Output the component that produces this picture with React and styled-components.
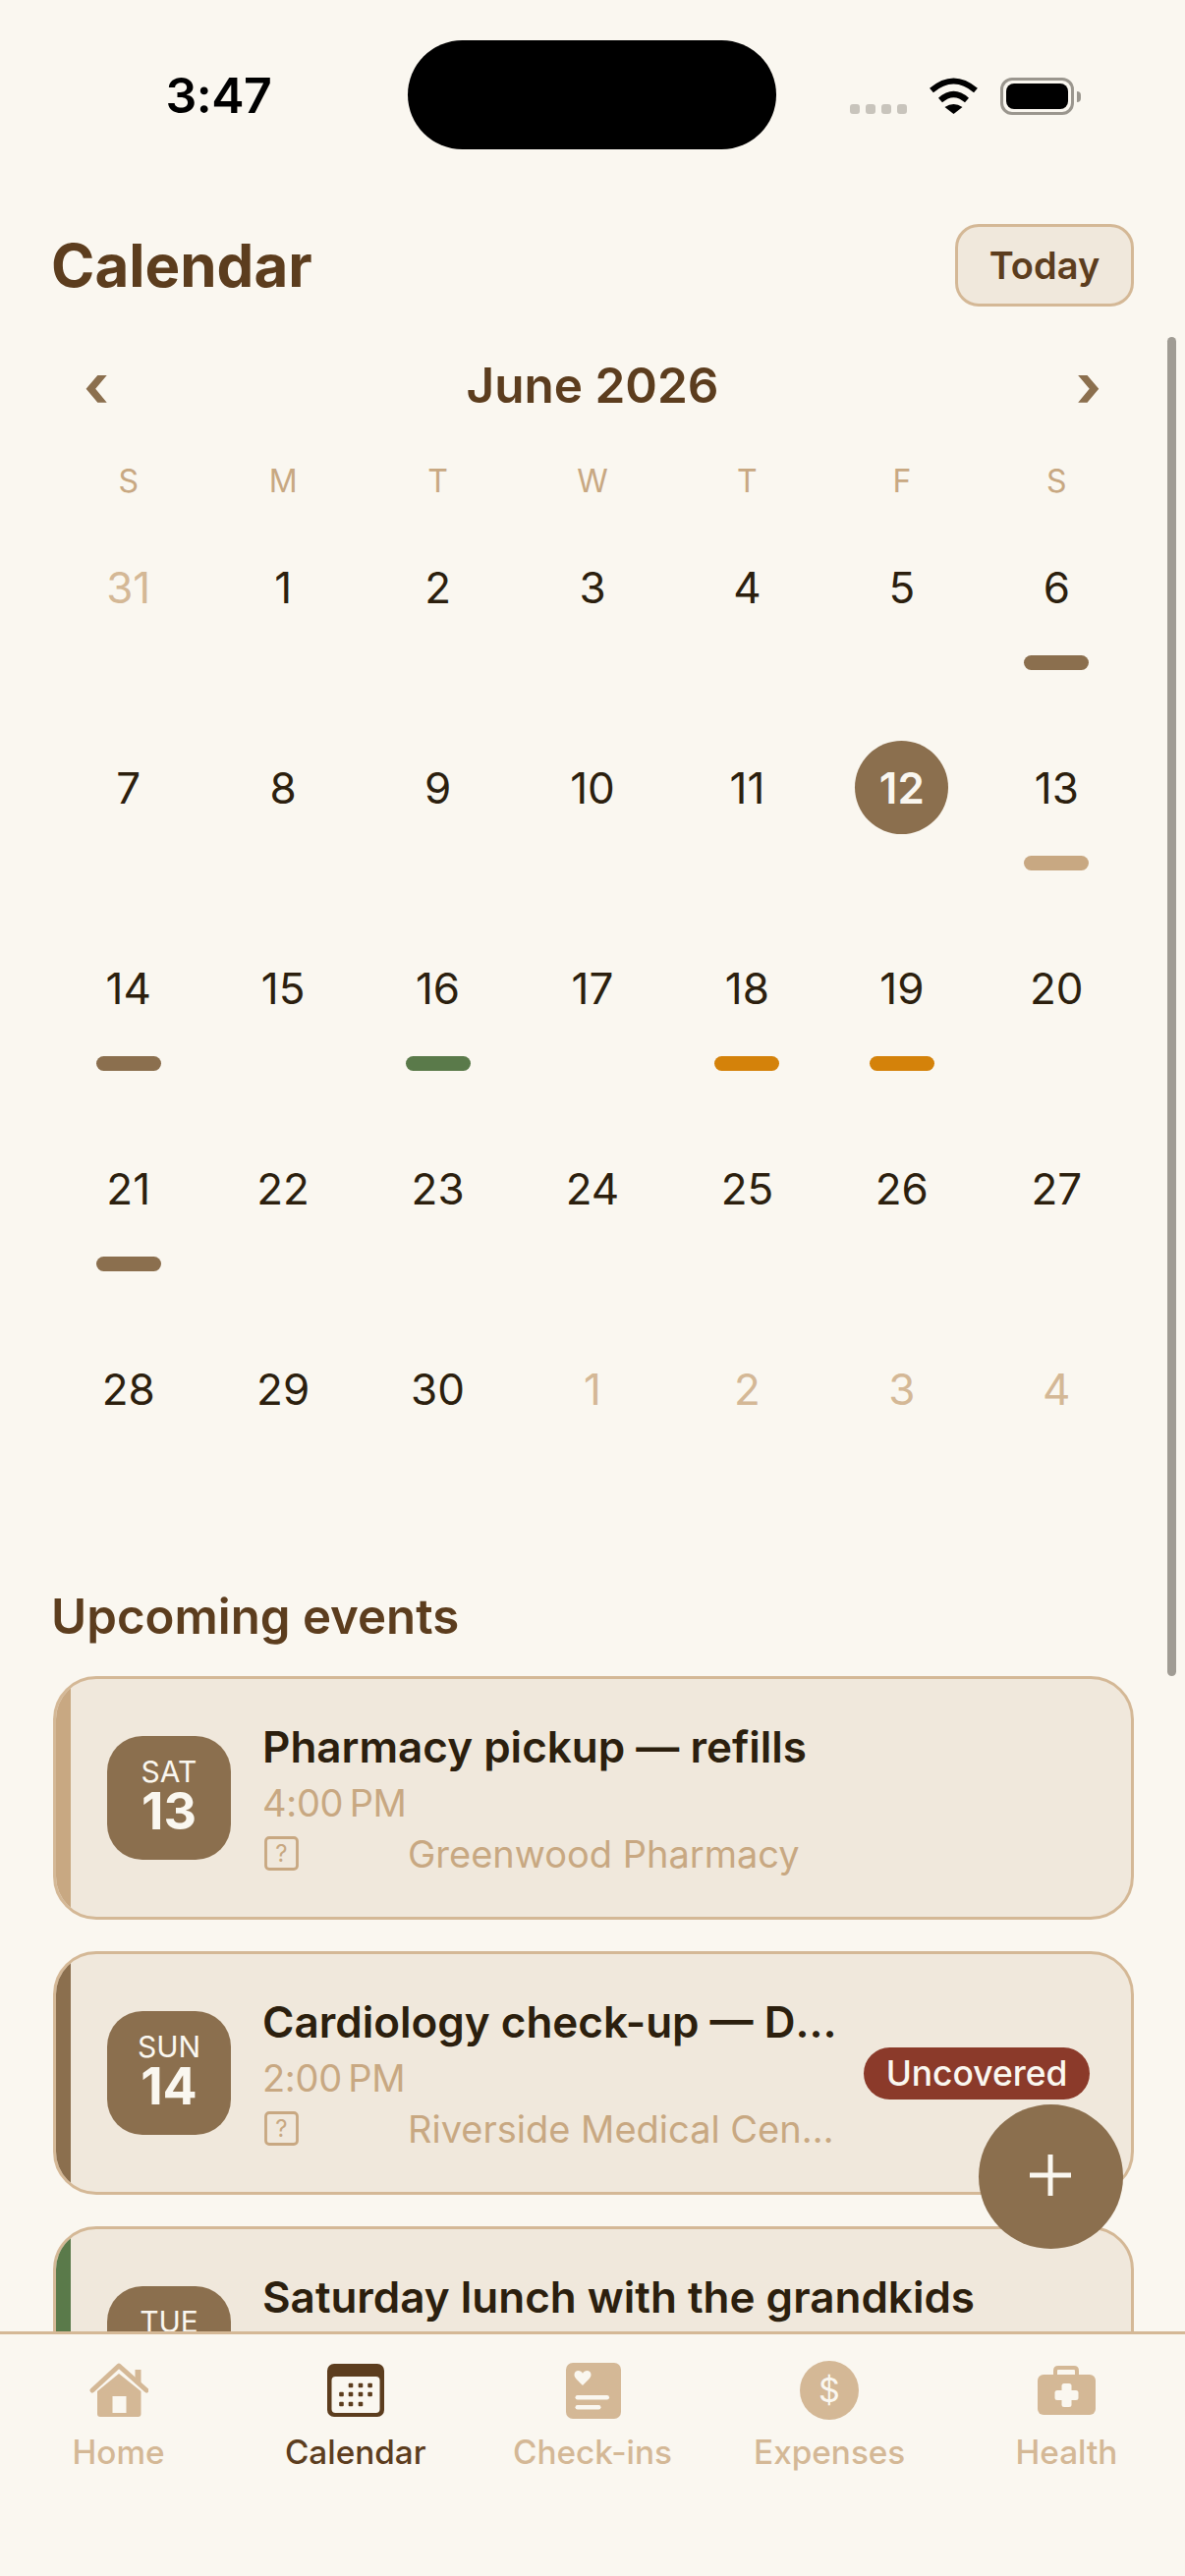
import React from 'react'
import styled, { createGlobalStyle } from 'styled-components'

const colors = {
  bg: '#FAF7F0',
  card: '#F0E8DC',
  line: '#D4B896',
  tan: '#C8A882',
  brown: '#8B6F4E',
  dark: '#5C3D1E',
  ink: '#2C1F0E',
  green: '#5A7A4A',
  amber: '#D4820A',
  red: '#8B3A2A',
}

const GlobalStyle = createGlobalStyle`
  html, body {
    margin: 0;
    padding: 0;
    background: ${colors.bg};
  }
  * { box-sizing: border-box; }
`

const weekdays = ['S', 'M', 'T', 'W', 'T', 'F', 'S']

const days = [
  { n: 31, muted: true }, { n: 1 }, { n: 2 }, { n: 3 }, { n: 4 }, { n: 5 }, { n: 6, bar: colors.brown },
  { n: 7 }, { n: 8 }, { n: 9 }, { n: 10 }, { n: 11 }, { n: 12, today: true }, { n: 13, bar: colors.tan },
  { n: 14, bar: colors.brown }, { n: 15 }, { n: 16, bar: colors.green }, { n: 17 }, { n: 18, bar: colors.amber }, { n: 19, bar: colors.amber }, { n: 20 },
  { n: 21, bar: colors.brown }, { n: 22 }, { n: 23 }, { n: 24 }, { n: 25 }, { n: 26 }, { n: 27 },
  { n: 28 }, { n: 29 }, { n: 30 }, { n: 1, muted: true }, { n: 2, muted: true }, { n: 3, muted: true }, { n: 4, muted: true },
]

const events = [
  { dow: 'SAT', day: 13, title: 'Pharmacy pickup — refills', time: '4:00 PM', place: 'Greenwood Pharmacy', stripe: colors.tan },
  { dow: 'SUN', day: 14, title: 'Cardiology check-up — Dr. Patel', time: '2:00 PM', place: 'Riverside Medical Center', stripe: colors.brown, badge: 'Uncovered' },
  { dow: 'TUE', day: 16, title: 'Saturday lunch with the grandkids', time: '12:30 PM', place: 'Home', stripe: colors.green },
]

const HomeIcon = () => (
  <svg width="60" height="60" viewBox="0 0 60 60">
    <path d="M8 31 L30 13 L52.5 31 V54 Q52.5 57 49.5 57 H11 Q8 57 8 54 Z" fill={colors.line} />
    <rect x="23.5" y="36" width="14" height="17" fill={colors.bg} />
    <path d="M3 30 L30 5 L58 30" fill="none" stroke={colors.line} strokeWidth="5" strokeLinecap="round" strokeLinejoin="round" />
    <rect x="46.5" y="9" width="6" height="14" fill={colors.line} />
  </svg>
)

const CalendarIcon = () => {
  const dots = [
    [25, 25], [35, 25], [44.6, 25],
    [15.5, 34], [25, 34], [35, 34], [44.6, 34],
    [15.5, 44], [25, 44], [35, 44],
  ]
  return (
    <svg width="60" height="60" viewBox="0 0 60 60">
      <rect x="1" y="3" width="58" height="54" rx="7" fill={colors.dark} />
      <rect x="5.5" y="16" width="49" height="37" rx="4" fill={colors.bg} />
      {dots.map(([x, y]) => (
        <rect key={`${x}-${y}`} x={x - 2.3} y={y - 2.3} width="4.6" height="4.6" rx="1" fill={colors.dark} />
      ))}
    </svg>
  )
}

const CheckinIcon = () => (
  <svg width="60" height="60" viewBox="0 0 60 60">
    <rect x="3" y="2" width="56" height="57" rx="7" fill={colors.line} />
    <path d="M20 25 C16 20.5 11.5 18 11.5 14 C11.5 11.5 13.5 10 15.5 10 C17.5 10 19 11 20 12.8 C21 11 22.5 10 24.5 10 C26.5 10 28.5 11.5 28.5 14 C28.5 18 24 20.5 20 25 Z" fill={colors.bg} />
    <rect x="12.5" y="35" width="34.5" height="4.4" rx="2.2" fill={colors.bg} />
    <rect x="12.5" y="45" width="26" height="4.4" rx="2.2" fill={colors.bg} />
  </svg>
)

const ExpenseIcon = () => (
  <svg width="60" height="60" viewBox="0 0 60 60">
    <circle cx="30" cy="30" r="30" fill={colors.line} />
    <text x="30" y="42" textAnchor="middle" fontFamily="Inter, sans-serif" fontSize="34" fill={colors.bg}>$</text>
  </svg>
)

const HealthIcon = () => (
  <svg width="60" height="60" viewBox="0 0 60 60">
    <path d="M19 15 V10 Q19 7 22 7 H38 Q41 7 41 10 V15" fill="none" stroke={colors.line} strokeWidth="4" />
    <rect x="1" y="14" width="59" height="41" rx="6" fill={colors.line} />
    <rect x="25.5" y="23" width="10" height="24" rx="2.5" fill={colors.bg} />
    <rect x="18.5" y="30" width="24" height="10" rx="2.5" fill={colors.bg} />
  </svg>
)

const tabs = [
  { label: 'Home', icon: <HomeIcon /> },
  { label: 'Calendar', icon: <CalendarIcon />, active: true },
  { label: 'Check-ins', icon: <CheckinIcon /> },
  { label: 'Expenses', icon: <ExpenseIcon /> },
  { label: 'Health', icon: <HealthIcon /> },
]

const App = () => {
  return (
    <Screen>
      <GlobalStyle />
      <StatusBar>
        <Clock>3:47</Clock>
        <Island />
        <StatusIcons>
          <SignalDots>
            <i /><i /><i /><i />
          </SignalDots>
          <svg width="51" height="37" viewBox="0 0 51 37">
            <path d="M3 13 Q25.5 -6 48 13" fill="none" stroke="#000" strokeWidth="6" />
            <path d="M12 23 Q25.5 11 39 23" fill="none" stroke="#000" strokeWidth="6" />
            <path d="M16.5 30 Q25.5 24 34.5 30 L25.5 37 Z" fill="#000" />
          </svg>
          <Battery>
            <BatteryFill />
          </Battery>
        </StatusIcons>
      </StatusBar>

      <Scroller>
        <ScrollThumb />
        <Header>
          <Title>Calendar</Title>
          <TodayButton>Today</TodayButton>
        </Header>

        <MonthRow>
          <MonthArrow>‹</MonthArrow>
          <MonthName>June 2026</MonthName>
          <MonthArrow>›</MonthArrow>
        </MonthRow>

        <WeekRow>
          {weekdays.map((d, i) => <WeekDay key={i}>{d}</WeekDay>)}
        </WeekRow>

        <DayGrid>
          {days.map((d, i) => (
            <DayCell key={i}>
              <DayNumber $muted={d.muted} $today={d.today}>{d.n}</DayNumber>
              {d.bar && <EventBar $color={d.bar} />}
            </DayCell>
          ))}
        </DayGrid>

        <SectionTitle>Upcoming events</SectionTitle>

        <EventList>
          {events.map((e) => (
            <EventCard key={e.title}>
              <Stripe $color={e.stripe} />
              <CardBody>
                <DateBox>
                  <DateDow>{e.dow}</DateDow>
                  <DateDay>{e.day}</DateDay>
                </DateBox>
                <EventText>
                  <EventTitle>{e.title}</EventTitle>
                  <EventTime>{e.time}</EventTime>
                  <PlaceRow>
                    <svg width="36" height="36" viewBox="0 0 36 36">
                      <rect x="1.5" y="1.5" width="32" height="32" rx="3.5" fill="none" stroke={colors.tan} strokeWidth="2.8" />
                      <text x="17.5" y="26" textAnchor="middle" fontFamily="Inter, sans-serif" fontSize="24" fill={colors.tan}>?</text>
                    </svg>
                    <PlaceName>{e.place}</PlaceName>
                  </PlaceRow>
                </EventText>
                {e.badge && <Badge>{e.badge}</Badge>}
              </CardBody>
            </EventCard>
          ))}
        </EventList>
      </Scroller>

      <AddButton>
        <svg width="42" height="42" viewBox="0 0 42 42">
          <path d="M21 0 V42 M0 21 H42" stroke={colors.bg} strokeWidth="5" />
        </svg>
      </AddButton>

      <TabBar>
        {tabs.map((t) => (
          <Tab key={t.label}>
            {t.icon}
            <TabLabel $active={t.active}>{t.label}</TabLabel>
          </Tab>
        ))}
      </TabBar>
    </Screen>
  )
}

export default App

const Screen = styled.div`
  position: relative;
  width: 1206px;
  height: 2622px;
  display: flex;
  flex-direction: column;
  overflow: hidden;
  background: ${colors.bg};
  font-family: Inter, 'Noto Sans', sans-serif;
`

const StatusBar = styled.div`
  display: grid;
  grid-template-columns: 415px 375px 1fr;
  flex: none;
  height: 152px;
  padding-top: 41px;
`

const Clock = styled.div`
  padding-left: 30px;
  text-align: center;
  font-size: 50px;
  line-height: 113px;
  letter-spacing: -0.5px;
  font-weight: 600;
  color: #000;
`

const Island = styled.div`
  height: 111px;
  border-radius: 56px;
  background: #000;
`

const StatusIcons = styled.div`
  display: flex;
  align-items: flex-start;
  padding: 38px 0 0 75px;
  svg { margin-left: 22px; }
`

const SignalDots = styled.div`
  display: flex;
  gap: 6px;
  margin-top: 27px;
  i {
    display: block;
    width: 10px;
    height: 10px;
    border-radius: 3px;
    background: #C8C4BC;
  }
`

const Battery = styled.div`
  position: relative;
  width: 75px;
  height: 38px;
  margin-left: 22px;
  padding: 3px;
  border: 3px solid #9A968E;
  border-radius: 12px;
  &::after {
    content: '';
    position: absolute;
    right: -10px;
    top: 11px;
    width: 4px;
    height: 11px;
    border-radius: 0 4px 4px 0;
    background: #9A968E;
  }
`

const BatteryFill = styled.div`
  width: 100%;
  height: 100%;
  border-radius: 8px;
  background: #000;
`

const Scroller = styled.div`
  position: relative;
  flex: 1;
  min-height: 0;
  overflow: hidden;
  padding: 76px 52px 0 52px;
`

const ScrollThumb = styled.div`
  position: absolute;
  right: 9px;
  top: 191px;
  width: 9px;
  height: 1363px;
  border-radius: 5px;
  background: #A09C94;
`

const Header = styled.div`
  display: flex;
  align-items: center;
  justify-content: space-between;
  height: 84px;
`

const Title = styled.h1`
  margin: 0;
  font-size: 60px;
  line-height: 72px;
  font-weight: 700;
  color: ${colors.dark};
`

const TodayButton = styled.button`
  width: 182px;
  height: 84px;
  padding: 0;
  border: 3px solid ${colors.line};
  border-radius: 24px;
  background: ${colors.card};
  color: ${colors.dark};
  font-family: inherit;
  font-size: 38px;
  font-weight: 600;
`

const MonthRow = styled.div`
  display: flex;
  align-items: center;
  justify-content: space-between;
  height: 60px;
  margin-top: 50px;
  padding: 0 26px;
`

const MonthName = styled.div`
  font-size: 49.5px;
  font-weight: 600;
  line-height: 60px;
  color: ${colors.dark};
`

const MonthArrow = styled.div`
  width: 40px;
  text-align: center;
  font-size: 60px;
  line-height: 60px;
  font-weight: 700;
  color: ${colors.brown};
`

const WeekRow = styled.div`
  display: grid;
  grid-template-columns: repeat(7, 1fr);
  margin-top: 48px;
`

const WeekDay = styled.div`
  text-align: center;
  font-size: 32px;
  line-height: 40px;
  font-weight: 400;
  color: ${colors.tan};
`

const DayGrid = styled.div`
  display: grid;
  grid-template-columns: repeat(7, 1fr);
  grid-auto-rows: 204px;
  margin-top: 28px;
`

const DayCell = styled.div`
  display: flex;
  flex-direction: column;
  align-items: center;
  padding-top: 12px;
`

const DayNumber = styled.div`
  width: 95px;
  height: 95px;
  border-radius: 50%;
  display: flex;
  align-items: center;
  justify-content: center;
  font-size: 44px;
  font-weight: ${({ $today }) => ($today ? 600 : 400)};
  color: ${({ $today, $muted }) => ($today ? colors.bg : $muted ? colors.line : colors.ink)};
  background: ${({ $today }) => ($today ? colors.brown : 'transparent')};
`

const EventBar = styled.div`
  width: 66px;
  height: 15px;
  margin-top: 22px;
  border-radius: 8px;
  background: ${({ $color }) => $color};
`

const SectionTitle = styled.h2`
  margin: 57px 0 0;
  font-size: 49.2px;
  line-height: 60px;
  font-weight: 600;
  color: ${colors.dark};
`

const EventList = styled.div`
  display: flex;
  flex-direction: column;
  gap: 32px;
  margin: 31px 0 0 2px;
`

const EventCard = styled.div`
  display: flex;
  flex: none;
  height: 248px;
  border: 3px solid ${colors.line};
  border-radius: 44px;
  background: ${colors.card};
  overflow: hidden;
`

const Stripe = styled.div`
  flex: none;
  width: 15px;
  background: ${({ $color }) => $color};
`

const CardBody = styled.div`
  flex: 1;
  min-width: 0;
  display: flex;
  align-items: center;
  padding: 0 42px 0 37px;
`

const DateBox = styled.div`
  flex: none;
  width: 126px;
  height: 126px;
  padding-bottom: 6px;
  border-radius: 36px;
  background: ${colors.brown};
  color: ${colors.bg};
  display: flex;
  flex-direction: column;
  align-items: center;
  justify-content: center;
`

const DateDow = styled.div`
  font-size: 30px;
  line-height: 34px;
  font-weight: 400;
`

const DateDay = styled.div`
  font-size: 52px;
  line-height: 48px;
  font-weight: 700;
`

const EventText = styled.div`
  flex: 1;
  min-width: 0;
  margin-left: 32px;
`

const EventTitle = styled.div`
  margin-right: -8px;
  font-size: 44px;
  line-height: 54px;
  font-weight: 600;
  color: ${colors.ink};
  white-space: nowrap;
  overflow: hidden;
  text-overflow: ellipsis;
`

const EventTime = styled.div`
  margin-top: 8px;
  font-size: 38px;
  line-height: 44px;
  letter-spacing: -0.3px;
  word-spacing: -4px;
  color: ${colors.tan};
`

const PlaceRow = styled.div`
  display: flex;
  align-items: center;
  gap: 110px;
  margin-top: 8px;
  padding-left: 2px;
  svg { flex: none; }
`

const PlaceName = styled.div`
  min-width: 0;
  font-size: 38px;
  line-height: 44px;
  color: ${colors.tan};
  white-space: nowrap;
  overflow: hidden;
  text-overflow: ellipsis;
`

const Badge = styled.div`
  flex: none;
  width: 230px;
  margin-left: 29px;
  height: 53px;
  line-height: 53px;
  text-align: center;
  border-radius: 27px;
  background: ${colors.red};
  color: ${colors.bg};
  font-size: 35.4px;
  font-weight: 500;
`

const AddButton = styled.button`
  position: absolute;
  left: 996px;
  top: 2142px;
  width: 147px;
  height: 147px;
  padding: 0 2px 4px 0;
  border: 0;
  border-radius: 50%;
  background: ${colors.brown};
  display: flex;
  align-items: center;
  justify-content: center;
`

const TabBar = styled.nav`
  flex: none;
  height: 249px;
  display: grid;
  grid-template-columns: repeat(5, 1fr);
  padding-top: 27px;
  border-top: 3px solid ${colors.line};
  background: ${colors.bg};
`

const Tab = styled.div`
  display: flex;
  flex-direction: column;
  align-items: center;
`

const TabLabel = styled.div`
  margin-top: 11px;
  font-size: 33.3px;
  line-height: 44px;
  font-weight: 500;
  color: ${({ $active }) => ($active ? colors.dark : colors.line)};
`
